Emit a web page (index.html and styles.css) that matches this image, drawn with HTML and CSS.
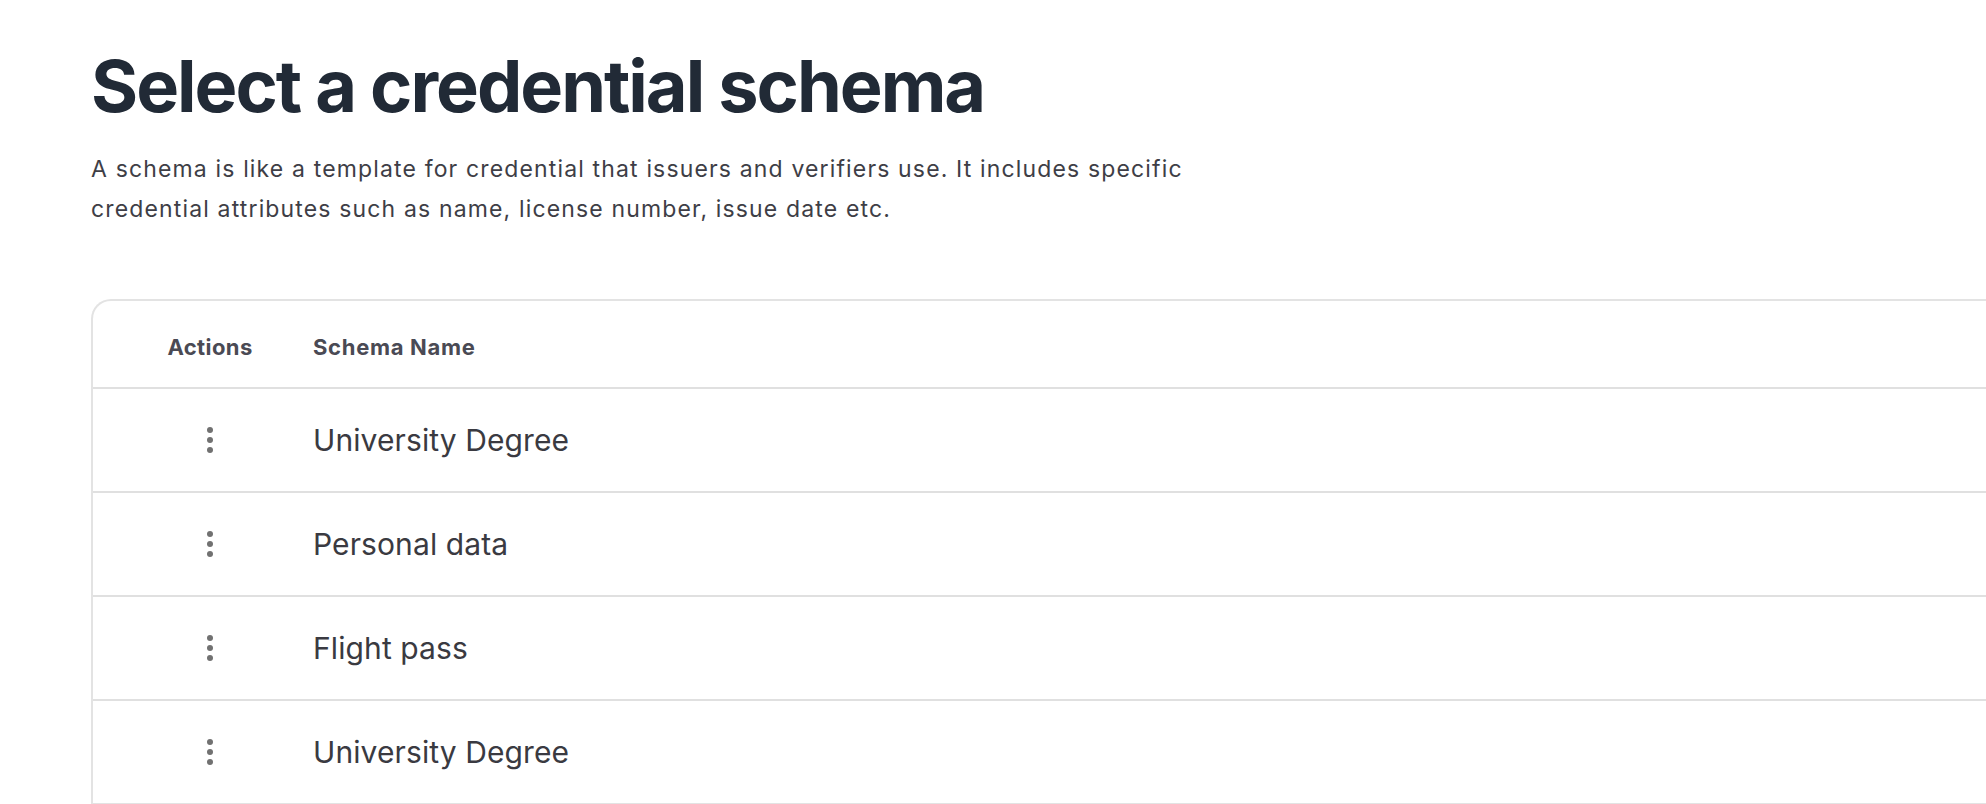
FILE: index.html
```html
<!DOCTYPE html>
<html lang="en">
<head>
<meta charset="utf-8">
<title>Select a credential schema</title>
<link rel="stylesheet" href="styles.css">
</head>
<body>
<main class="page">
  <h1 class="title">Select a credential schema</h1>
  <p class="intro">A schema is like a template for credential that issuers and verifiers use. It includes specific credential attributes such as name, license number, issue date etc.</p>

  <section class="card">
    <div class="row head">
      <div class="col-actions">Actions</div>
      <div class="col-name">Schema Name</div>
    </div>
    <div class="row">
      <div class="col-actions"><span class="kebab"><i></i><i></i><i></i></span></div>
      <div class="col-name">University Degree</div>
    </div>
    <div class="row">
      <div class="col-actions"><span class="kebab"><i></i><i></i><i></i></span></div>
      <div class="col-name">Personal data</div>
    </div>
    <div class="row">
      <div class="col-actions"><span class="kebab"><i></i><i></i><i></i></span></div>
      <div class="col-name">Flight pass</div>
    </div>
    <div class="row">
      <div class="col-actions"><span class="kebab"><i></i><i></i><i></i></span></div>
      <div class="col-name">University Degree</div>
    </div>
  </section>
</main>
</body>
</html>
```

FILE: styles.css
```css
html, body {
  margin: 0;
  padding: 0;
  background: #ffffff;
  overflow: hidden;
}

body {
  font-family: Inter, "Noto Sans", sans-serif;
}

.page {
  padding: 43px 0 0 91px;
}

.title {
  margin: 0;
  font-size: 72px;
  line-height: 86px;
  font-weight: 700;
  letter-spacing: -2px;
  color: #212a36;
}

.intro {
  margin: 20px 0 0 0;
  max-width: 1110px;
  font-size: 23px;
  line-height: 40px;
  font-weight: 400;
  letter-spacing: 1.15px;
  color: #3e3e46;
}

.card {
  margin-top: 70px;
  width: 1960px;
  border: 2px solid #e3e3e3;
  border-right: none;
  border-top-left-radius: 20px;
  background: #ffffff;
}

.row {
  display: flex;
  align-items: center;
  height: 102px;
  padding-left: 75px;
  border-top: 2px solid #e0e0e0;
}

.row.head {
  height: 80px;
  padding-top: 6px;
  border-top: none;
  font-size: 22px;
  font-weight: 700;
  letter-spacing: 0.4px;
  color: #4a4a54;
}

.col-actions {
  width: 84px;
  flex: none;
  display: flex;
  justify-content: center;
}

.col-name {
  margin-left: 61px;
  font-size: 30px;
  letter-spacing: 0.1px;
  color: #3a3a41;
}

.head .col-name {
  font-size: 22px;
  letter-spacing: 0.7px;
  color: #4a4a54;
}

.kebab {
  display: flex;
  flex-direction: column;
  gap: 4px;
}

.kebab i {
  display: block;
  width: 6px;
  height: 6px;
  border-radius: 50%;
  background: #717171;
}
```
